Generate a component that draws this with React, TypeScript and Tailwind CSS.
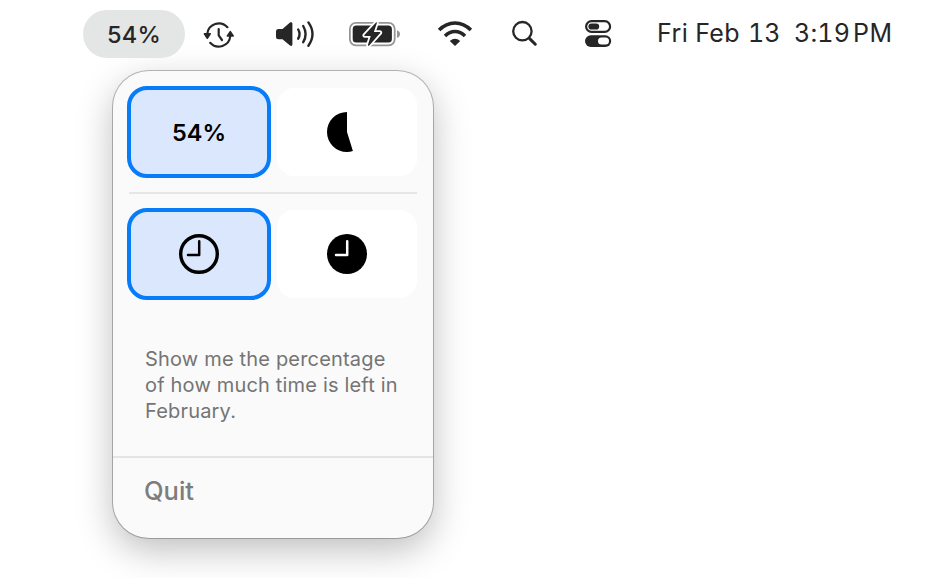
import type { ReactNode } from 'react';

interface TileProps {
  selected?: boolean;
  children: ReactNode;
}

const INK = '#262626';

function HistoryIcon() {
  return (
    <svg width="32" height="28" viewBox="203 21 32 28" fill="none" stroke={INK} strokeWidth="2.2" strokeLinecap="round">
      <path d="M207.3 34 A11.6 11.6 0 0 1 227.4 27.2" />
      <path d="M230.3 36 A11.6 11.6 0 0 1 210.2 42.8" />
      <path d="M218.7 29 V35.5 L222 40" />
      <path d="M204.4 33.8 H210.2 L207.3 38.2 Z" fill={INK} strokeWidth="1.6" strokeLinejoin="round" />
      <path d="M227.4 36 H233.2 L230.3 31.6 Z" fill={INK} strokeWidth="1.6" strokeLinejoin="round" />
    </svg>
  );
}

function VolumeIcon() {
  return (
    <svg width="40" height="28" viewBox="276 20 40 28" fill="none" stroke={INK} strokeWidth="2.4" strokeLinecap="round">
      <path
        d="M278.5 28.9 H282.5 L290 22.6 C291.2 21.7 292.4 22.3 292.4 23.6 V44.6 C292.4 45.9 291.2 46.5 290 45.6 L282.5 39.3 H278.5 Q276 39.3 276 36.8 V31.4 Q276 28.9 278.5 28.9 Z"
        fill={INK}
        stroke="none"
      />
      <path d="M298.2 29.5 Q300.9 34.1 298.2 38.7" />
      <path d="M303.2 26 Q308 34.1 303.2 42.2" />
      <path d="M308.4 22.4 Q316.6 34.1 308.4 45.8" />
    </svg>
  );
}

function BatteryIcon() {
  return (
    <svg width="52" height="28" viewBox="349 20 52 28">
      <rect x="349.9" y="22.9" width="44.8" height="22.4" rx="6" fill="none" stroke="#969696" strokeWidth="1.8" />
      <path d="M397 30.2 Q400 31.3 400 34.1 Q400 36.9 397 38 Z" fill="#969696" />
      <rect x="352.7" y="25.6" width="39.2" height="17" rx="3.6" fill={INK} />
      <path
        d="M376 22.6 L364.4 34.9 Q363.8 36 365 36 H370.7 L367.9 45 Q368 46.4 369.2 45.4 L380.2 33.1 Q380.8 32 379.6 32 H373.9 L376.9 23 Q377 21.6 376 22.6 Z"
        fill={INK}
        stroke="#fff"
        strokeWidth="3.6"
        paintOrder="stroke"
        strokeLinejoin="round"
      />
    </svg>
  );
}

function WifiIcon() {
  return (
    <svg width="36" height="28" viewBox="437 20 36 28" fill="none" stroke={INK} strokeWidth="3.5">
      <path d="M439.1 30 Q446 22.9 455 22.9 T470.9 30" />
      <path d="M445 36 Q449.4 31.6 455 31.6 T465 36" />
      <path d="M455 45.9 L449.8 40.9 Q455 36.8 460.2 40.9 Z" fill={INK} stroke="none" />
    </svg>
  );
}

function SearchIcon() {
  return (
    <svg width="28" height="28" viewBox="510 20 28 28" fill="none" stroke={INK} strokeLinecap="round">
      <circle cx="522.4" cy="31.2" r="9.2" strokeWidth="2.3" />
      <path d="M529.6 38.6 L535.3 44.2" strokeWidth="3" />
    </svg>
  );
}

function ControlCenterIcon() {
  return (
    <svg width="28" height="28" viewBox="584 20 28 28">
      <rect x="586.1" y="21.1" width="24" height="10.8" rx="5.4" fill="none" stroke={INK} strokeWidth="2.2" />
      <rect x="588.4" y="23.4" width="10.8" height="6.2" rx="3.1" fill={INK} />
      <rect x="585" y="35.2" width="26.2" height="11.8" rx="5.9" fill={INK} />
      <rect x="598" y="37.6" width="11" height="7" rx="3.5" fill="#fff" />
    </svg>
  );
}

function PieIcon() {
  return (
    <svg width="40" height="40" viewBox="-20 -20 40 40">
      <path d="M0 0 V-20 A20 20 0 0 0 0 20 Q3 20 5.9 19.1 Z" fill="#000" />
    </svg>
  );
}

function ClockIcon({ filled = false }: { filled?: boolean }) {
  return (
    <svg width="40" height="40" viewBox="-20 -20 40 40" fill="none">
      <circle r={filled ? 20 : 18.3} fill={filled ? '#000' : 'none'} stroke="#000" strokeWidth={filled ? 0 : 3.4} />
      <path
        d="M0.2 -12.8 V1 H-11"
        stroke={filled ? '#fff' : '#000'}
        strokeWidth="2.5"
        strokeLinecap="round"
        strokeLinejoin="round"
      />
    </svg>
  );
}

function Tile({ selected = false, children }: TileProps) {
  return (
    <button
      className={
        selected
          ? 'flex h-[92px] w-36 items-center justify-center rounded-[20px] border-4 border-[#067cf8] bg-[#dae7fd]'
          : 'flex h-[88px] w-[140px] items-center justify-center rounded-[17px] bg-white'
      }
    >
      {children}
    </button>
  );
}

export default function App() {
  return (
    <div className="h-[578px] w-[925px] overflow-hidden bg-white font-['Inter',sans-serif]">
      {/* Menu bar */}
      <header className="flex h-[71px] items-start pt-2.5 pl-[83px] text-[#262626]">
        <div className="z-10 flex h-12 w-[102px] items-center justify-center rounded-full bg-[#e4e5e5] pt-0.5 text-[23.5px] font-medium tracking-[0.2px]">
          54%
        </div>
        <div className="flex h-12 items-center">
          <div className="ml-[18px] pt-0.5"><HistoryIcon /></div>
          <div className="ml-[41px]"><VolumeIcon /></div>
          <div className="ml-[33px]"><BatteryIcon /></div>
          <div className="ml-[36px]"><WifiIcon /></div>
          <div className="ml-[37px]"><SearchIcon /></div>
          <div className="ml-[46px]"><ControlCenterIcon /></div>
          <time className="ml-[45px] flex text-[25px] whitespace-nowrap tabular-nums">
            <span className="w-[91px] tracking-[0.4px]">Fri Feb</span>
            <span className="w-[46px]">13</span>
            <span className="w-[59px] tracking-[0.2px]">3:19</span>
            <span className="tracking-[0.5px]">PM</span>
          </time>
        </div>
      </header>

      {/* Popover */}
      <main className="ml-[113px] flex h-[467px] w-80 flex-col rounded-[36px] bg-[#fafafa] shadow-[0_0_0_1px_rgba(0,0,0,0.26),0_12px_36px_rgba(0,0,0,0.26)]">
        <div className="flex items-center gap-1.5 pt-[15px] pl-3.5">
          <Tile selected>
            <span className="pt-0.5 text-[23.5px] font-semibold text-black">54%</span>
          </Tile>
          <Tile><PieIcon /></Tile>
        </div>
        <hr className="mx-4 mt-3.5 border-t-2 border-[#e6e6e6]" />
        <div className="mt-3.5 flex items-center gap-1.5 pl-3.5">
          <Tile selected><ClockIcon /></Tile>
          <Tile><ClockIcon filled /></Tile>
        </div>
        <p className="mt-[46px] ml-8 text-[20px] leading-[26px] tracking-[0.18px] whitespace-nowrap text-[#747474]">
          Show me the percentage<br />
          of how much time is left in<br />
          February.
        </p>
        <hr className="mt-8 border-t-2 border-[#e4e4e4]" />
        <button className="mt-[17px] ml-[31px] self-start text-[25.5px] leading-8 font-medium text-[#7d7d7d]">Quit</button>
      </main>
    </div>
  );
}
